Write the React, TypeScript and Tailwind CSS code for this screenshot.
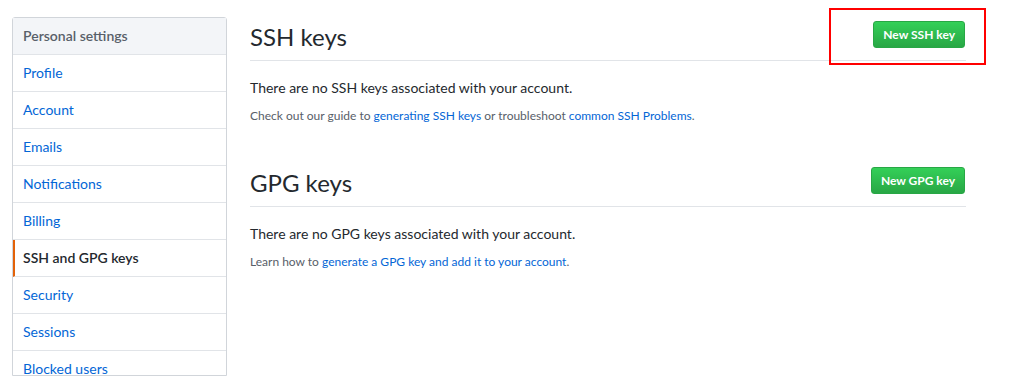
const NAV = [
  'Profile',
  'Account',
  'Emails',
  'Notifications',
  'Billing',
  'SSH and GPG keys',
  'Security',
  'Sessions',
  'Blocked users',
]

const ACTIVE = 'SSH and GPG keys'

function SettingsNav() {
  return (
    <nav className="w-[215px] shrink-0 rounded-t-[3px] border border-[#d1d5da]">
      <div className="h-[37px] border-b border-[#e1e4e8] bg-[#f3f5f8] px-[10px] text-[14px] leading-[36px] font-semibold text-[#586069]">
        Personal settings
      </div>
      {NAV.map((item) => {
        const active = item === ACTIVE
        return (
          <div
            key={item}
            className={`h-[37px] border-b border-[#e1e4e8] text-[14px] leading-[36px] ${
              active
                ? 'border-l-2 border-l-[#e36209] pl-[8px] font-semibold text-[#24292e]'
                : 'pl-[10px] text-[#0366d6]'
            }`}
          >
            {item}
          </div>
        )
      })}
    </nav>
  )
}

function GreenButton({ label }: { label: string }) {
  return (
    <button
      type="button"
      className="h-[27px] rounded-[3px] border border-[#28a745] bg-gradient-to-b from-[#34d058] to-[#28a745] px-[9px] text-[12px] font-bold text-white"
    >
      {label}
    </button>
  )
}

function KeySection({
  title,
  button,
  empty,
  children,
  framed,
}: {
  title: string
  button: string
  empty: string
  children: React.ReactNode
  framed?: boolean
}) {
  return (
    <section>
      <div className="flex h-[44px] items-end border-b border-[#e1e4e8] pb-[8px]">
        <h2 className="text-[24px] leading-[30px] font-normal text-[#24292e]">{title}</h2>
        <div className="relative ml-auto mr-[1px] mb-[4px]">
          {framed && (
            <span className="pointer-events-none absolute top-[-13px] right-[-21px] h-[57px] w-[157px] border-2 border-[#ff0000]" />
          )}
          <GreenButton label={button} />
        </div>
      </div>
      <p className="mt-[17px] text-[14px] leading-[20px] text-[#24292e]">{empty}</p>
      <p className="mt-[9px] text-[12px] leading-[18px] text-[#586069]">{children}</p>
    </section>
  )
}

export default function App() {
  return (
    <div
      className="flex h-[376px] w-[1024px] gap-[23px] overflow-hidden bg-white pt-[17px] pl-[12px]"
      style={{ fontFamily: '"Segoe UI", Lato, "Noto Sans", sans-serif' }}
    >
      <SettingsNav />
      <main className="w-[716px]">
        <KeySection
          title="SSH keys"
          button="New SSH key"
          empty="There are no SSH keys associated with your account."
          framed
        >
          Check out our guide to <a className="text-[#0366d6]">generating SSH keys</a> or troubleshoot{' '}
          <a className="text-[#0366d6]">common SSH Problems</a>.
        </KeySection>
        <div className="mt-[38px]">
          <KeySection
            title="GPG keys"
            button="New GPG key"
            empty="There are no GPG keys associated with your account."
          >
            Learn how to <a className="text-[#0366d6]">generate a GPG key and add it to your account</a>.
          </KeySection>
        </div>
      </main>
    </div>
  )
}
